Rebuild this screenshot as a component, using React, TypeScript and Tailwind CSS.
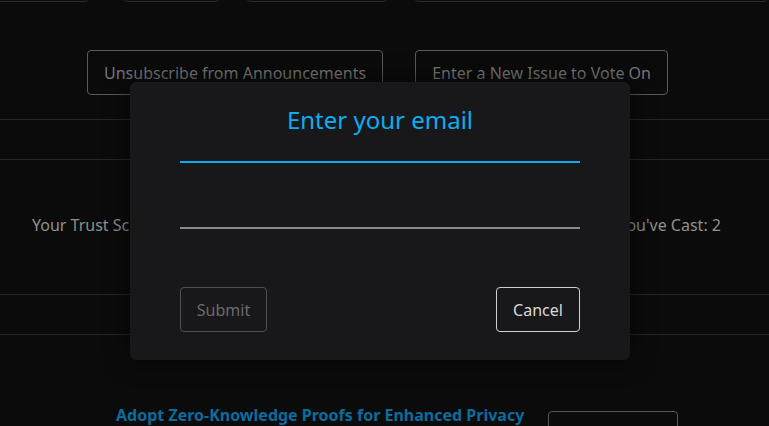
import React from 'react'

const font = { fontFamily: '"Noto Sans", "Open Sans", sans-serif' }

export default function App() {
  return (
    <div className="relative w-[769px] h-[426px] overflow-hidden bg-[#0b0b0b] text-[#8f8f8f]" style={font}>
      {/* cards from the section above, scrolled mostly out of view */}
      <div className="flex -mt-[38px] -ml-[10px]">
        <div className="w-[112px] h-[40px] border border-[#2a2a2a] rounded-md" />
        <div className="ml-[32px] w-[111px] h-[40px] border border-[#2a2a2a] rounded-md" />
        <div className="ml-[24px] w-[162px] h-[40px] border border-[#2a2a2a] rounded-md" />
        <div className="ml-[24px] w-[400px] h-[40px] border border-[#2a2a2a] rounded-md" />
      </div>

      <div className="flex gap-8 pl-[87px] mt-[48px]">
        <button className="h-[45px] px-4 border border-[#5a5a5a] rounded text-base text-[#777]">
          Unsubscribe from Announcements
        </button>
        <button className="h-[45px] px-4 border border-[#5a5a5a] rounded text-base text-[#777]">
          Enter a New Issue to Vote On
        </button>
      </div>

      <div className="mt-[24px] h-[41px] border-y border-[#262626]" />

      <div className="flex justify-between pl-8 pr-12 pt-[53px] pb-[57px] text-base">
        <span>Your Trust Score: 87</span>
        <span>Proposals Voted On: 4</span>
        <span>Votes You've Cast: 2</span>
      </div>

      <div className="h-[41px] border-y border-[#262626]" />

      <div className="flex items-start gap-6 pl-[116px] mt-[68px]">
        <span className="text-base font-bold text-[#0b6c9e]">Adopt Zero-Knowledge Proofs for Enhanced Privacy</span>
        <div className="w-[130px] h-[44px] mt-[8px] border border-[#555] rounded" />
      </div>

      {/* modal */}
      <div className="absolute left-[130px] top-[82px] w-[500px] h-[278px] bg-[#18181b] rounded-md shadow-[0_0_24px_rgba(0,0,0,0.7)] px-[50px] pt-[22px]">
        <h2 className="text-center text-2xl leading-8 text-[#0aaef0]">Enter your email</h2>
        <div className="mt-[25px] h-[2px] bg-[#0aaef0]" />
        <div className="mt-[64px] h-[2px] bg-[#8a8a8a]" />
        <div className="flex justify-between mt-[58px]">
          <button className="h-[45px] w-[87px] border border-[#4f4f4f] rounded text-base text-[#6a6a6a]">
            Submit
          </button>
          <button className="h-[45px] w-[84px] border border-[#cfcfcf] rounded text-base text-[#d8d8d8]">
            Cancel
          </button>
        </div>
      </div>
    </div>
  )
}
